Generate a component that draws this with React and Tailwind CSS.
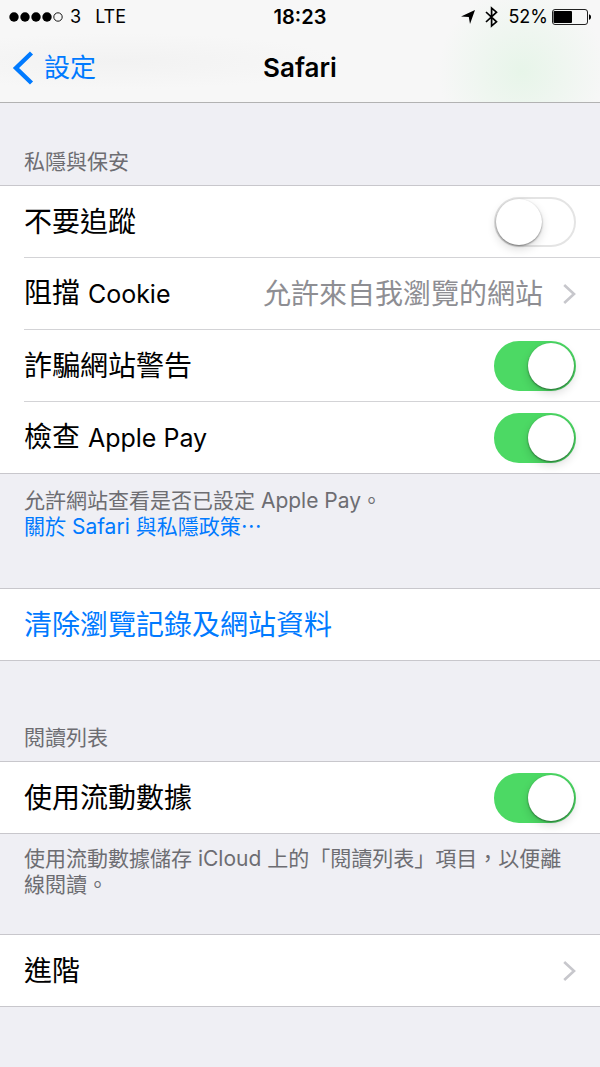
import { useId } from "react"

function SignalDots() {
  return (
    <svg width="55" height="12" viewBox="0 0 55 12" aria-hidden="true">
      {[5, 16, 27, 38].map((x) => (
        <circle key={x} cx={x} cy="6" r="4.7" fill="#000" />
      ))}
      <circle cx="49" cy="6" r="4.2" fill="none" stroke="#000" strokeWidth="0.9" />
    </svg>
  )
}

function LocationIcon() {
  return (
    <svg width="14" height="14" viewBox="0 0 14 14" aria-hidden="true">
      <path d="M14 0 L9 14 L7.8 6.9 L0 6.4 Z" fill="#000" />
    </svg>
  )
}

function BluetoothIcon() {
  return (
    <svg width="13" height="22" viewBox="0 0 13 22" aria-hidden="true">
      <path
        d="M1 6 L11.5 15.8 L6.6 20 V2 L11.5 6.2 L1 16"
        fill="none"
        stroke="#000"
        strokeWidth="1.7"
        strokeMiterlimit="10"
      />
    </svg>
  )
}

function BatteryIcon() {
  return (
    <svg width="39" height="16" viewBox="0 0 39 16" aria-hidden="true">
      <rect x="0.5" y="0.5" width="35" height="15" rx="2.5" fill="none" stroke="#222" strokeWidth="1" />
      <rect x="1.5" y="2" width="18.5" height="12" rx="1" fill="#000" />
      <path d="M37 5.2 C38.4 5.6 39 6.6 39 8 C39 9.4 38.4 10.4 37 10.8 Z" fill="#000" />
    </svg>
  )
}

function Chevron() {
  return (
    <svg width="13" height="20" viewBox="0 0 13 20" className="shrink-0" aria-hidden="true">
      <path d="M1.2 1 L11 10 L1.2 19" fill="none" stroke="#c7c7cc" strokeWidth="2.6" />
    </svg>
  )
}

// Latin words run a little smaller than the Chinese around them
function Latin({ children }) {
  return <span className="text-[25px]">{children}</span>
}

function Group({ children }) {
  return <div className="border-t border-[#c8c7cc] bg-white">{children}</div>
}

function GroupTitle({ children }) {
  return <h2 className="px-6 pb-2.5 text-[21px] leading-[26px] text-[#6d6d72]">{children}</h2>
}

// `last` stretches the bottom line over the full width
function Row({ last, children }) {
  return (
    <div className={last ? "border-b border-[#c8c7cc] pl-6" : "pl-6"}>
      <div
        className={
          last
            ? "flex h-[71px] items-center justify-between pr-6"
            : "flex h-[72px] items-center justify-between border-b border-[#d3d3d6] pr-6"
        }
      >
        {children}
      </div>
    </div>
  )
}

function ToggleRow({ label, on, last }) {
  const id = useId()
  return (
    <Row last={last}>
      <label htmlFor={id}>{label}</label>
      <input
        id={id}
        type="checkbox"
        role="switch"
        defaultChecked={on}
        className="flex h-[50px] w-[82px] shrink-0 appearance-none items-center rounded-full border-2 border-[#e4e4e4] bg-white before:size-[46px] before:rounded-full before:bg-white before:shadow-[0_1px_2px_rgba(0,0,0,0.45),0_4px_10px_rgba(0,0,0,0.15)] checked:justify-end checked:border-[#4cd964] checked:bg-[#4cd964]"
      />
    </Row>
  )
}

function LinkRow({ label, value, last }) {
  return (
    <Row last={last}>
      <a href="#" className="flex flex-1 items-center justify-between">
        <span>{label}</span>
        <span className="flex items-center gap-5">
          {value && <span className="text-[#8e8e93]">{value}</span>}
          <Chevron />
        </span>
      </a>
    </Row>
  )
}

export default function App() {
  return (
    <div
      lang="zh-HK"
      className="min-h-screen bg-[#efeff4] font-['Inter','Noto_Sans_CJK_TC',sans-serif] text-[28px] leading-[36px] text-black"
    >
      <header className="border-b border-[#b2b2b2] bg-[#f7f7f7] bg-[radial-gradient(circle_at_87%_70%,#e7f5e9_0,#f7f7f700_84px),radial-gradient(ellipse_at_20%_60%,#f2f2f2_0,#f7f7f700_220px)]">
        <div className="flex h-[34px] items-center px-[9px] text-[18px] leading-6">
          <div className="flex flex-1 items-center">
            <SignalDots />
            <span className="ml-1.5">3</span>
            <span className="ml-3.5">LTE</span>
          </div>
          <time className="text-[20px] font-semibold">18:23</time>
          <div className="flex flex-1 items-center justify-end">
            <LocationIcon />
            <span className="ml-2.5">
              <BluetoothIcon />
            </span>
            <span className="ml-2.5">52%</span>
            <span className="ml-1">
              <BatteryIcon />
            </span>
          </div>
        </div>
        <nav className="flex h-[68px] items-center px-3">
          <div className="flex-1">
            <button type="button" className="flex items-center gap-2.5 text-[26px] text-[#007aff]">
              <svg width="22" height="34" viewBox="0 0 22 34" aria-hidden="true">
                <path d="M19.5 2 L4 17 L19.5 32" fill="none" stroke="#007aff" strokeWidth="4.4" />
              </svg>
              設定
            </button>
          </div>
          <h1 className="text-[26px] font-semibold">Safari</h1>
          <div className="flex-1" />
        </nav>
      </header>

      <main>
        <section className="pt-[46px]">
          <GroupTitle>私隱與保安</GroupTitle>
          <Group>
            <ToggleRow label="不要追蹤" />
            <LinkRow label={<>阻擋 <Latin>Cookie</Latin></>} value="允許來自我瀏覽的網站" />
            <ToggleRow label="詐騙網站警告" on />
            <ToggleRow label={<>檢查 <Latin>Apple Pay</Latin></>} on last />
          </Group>
          <div className="px-6 pt-3.5 pb-12 text-[21px] leading-[26px] text-[#6d6d72]">
            <p>允許網站查看是否已設定 Apple Pay。</p>
            <a href="#" className="block text-[#007aff]">
              關於 Safari 與私隱政策<span className="font-['Noto_Sans_CJK_TC',sans-serif] leading-none">…</span>
            </a>
          </div>
        </section>

        <Group>
          <Row last>
            <button type="button" className="text-[#007aff]">
              清除瀏覽記錄及網站資料
            </button>
          </Row>
        </Group>

        <section className="pt-16">
          <GroupTitle>閱讀列表</GroupTitle>
          <Group>
            <ToggleRow label="使用流動數據" on last />
          </Group>
          <p className="px-6 pt-3 pb-9 text-[21px] leading-[26px] text-[#6d6d72]">
            使用流動數據儲存 iCloud 上的「閱讀列表」項目，以便離線閱讀。
          </p>
        </section>

        <Group>
          <LinkRow label="進階" last />
        </Group>
      </main>
    </div>
  )
}
